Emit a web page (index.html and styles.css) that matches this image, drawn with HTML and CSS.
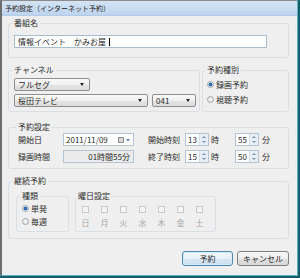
FILE: index.html
```html
<!DOCTYPE html>
<html lang="ja">
<head>
    <meta charset="UTF-8">
    <meta name="viewport" content="width=device-width, initial-scale=1.0">
    <title>予約設定（インターネット予約）</title>
    <link rel="stylesheet" href="styles.css">
</head>
<body>
    <div class="window">
        <div class="titlebar">予約設定（インターネット予約）</div>

        <div class="content">
            <fieldset class="group group-name">
                <legend>番組名</legend>
                <div class="textbox"><span>情報イベント　かみお屋</span><span class="caret"></span></div>
            </fieldset>

            <div class="group-row">
                <fieldset class="group group-channel">
                    <legend>チャンネル</legend>
                    <div class="combo combo-type"><span class="combo-text">フルセグ</span><span class="arrow"></span></div>
                    <div class="combo-row">
                        <div class="combo combo-station"><span class="combo-text">桜田テレビ</span><span class="arrow"></span></div>
                        <div class="combo combo-number"><span class="combo-text">041</span><span class="arrow"></span></div>
                    </div>
                </fieldset>

                <fieldset class="group group-kind">
                    <legend>予約種別</legend>
                    <div class="radio-line"><span class="radio checked"></span>録画予約</div>
                    <div class="radio-line"><span class="radio"></span>視聴予約</div>
                </fieldset>
            </div>

            <fieldset class="group group-time">
                <legend>予約設定</legend>
                <div class="time-row">
                    <span class="label">開始日</span>
                    <div class="datebox">
                        <span class="date-text">2011/11/09</span>
                        <span class="cal-icon"></span>
                        <span class="cal-arrow"></span>
                    </div>
                    <span class="label label-time">開始時刻</span>
                    <div class="spin"><span class="spin-value">13</span><span class="spin-buttons"><span class="up"></span><span class="down"></span></span></div>
                    <span class="unit unit-hour">時</span>
                    <div class="spin"><span class="spin-value">55</span><span class="spin-buttons"><span class="up"></span><span class="down"></span></span></div>
                    <span class="unit unit-min">分</span>
                </div>
                <div class="time-row">
                    <span class="label">録画時間</span>
                    <div class="duration">01時間55分</div>
                    <span class="label label-time">終了時刻</span>
                    <div class="spin"><span class="spin-value">15</span><span class="spin-buttons"><span class="up"></span><span class="down"></span></span></div>
                    <span class="unit unit-hour">時</span>
                    <div class="spin"><span class="spin-value">50</span><span class="spin-buttons"><span class="up"></span><span class="down"></span></span></div>
                    <span class="unit unit-min">分</span>
                </div>
            </fieldset>

            <fieldset class="group group-repeat">
                <legend>継続予約</legend>
                <div class="repeat-row">
                    <fieldset class="group group-repeat-type">
                        <legend>種類</legend>
                        <div class="radio-line"><span class="radio checked"></span>単発</div>
                        <div class="radio-line"><span class="radio"></span>毎週</div>
                    </fieldset>
                    <fieldset class="group group-days">
                        <legend>曜日設定</legend>
                        <div class="days">
                            <div class="day"><span class="checkbox"></span><span>日</span></div>
                            <div class="day"><span class="checkbox"></span><span>月</span></div>
                            <div class="day"><span class="checkbox"></span><span>火</span></div>
                            <div class="day"><span class="checkbox"></span><span>水</span></div>
                            <div class="day"><span class="checkbox"></span><span>木</span></div>
                            <div class="day"><span class="checkbox"></span><span>金</span></div>
                            <div class="day"><span class="checkbox"></span><span>土</span></div>
                        </div>
                    </fieldset>
                </div>
            </fieldset>

            <div class="buttons">
                <button class="btn btn-default">予約</button>
                <button class="btn">キャンセル</button>
            </div>
        </div>
    </div>
</body>
</html>
```

FILE: styles.css
```css
* {
    box-sizing: border-box;
}

html, body {
    margin: 0;
    padding: 0;
}

body {
    width: 300px;
    height: 278px;
    overflow: hidden;
    background: #15606c;
    font-family: "Noto Sans CJK JP", "Noto Sans", sans-serif;
    font-size: 8px;
    color: #2b2b2b;
}

.window {
    width: 298px;
    height: 276px;
    background: #efefef;
    border-left: 2px solid #6c6c6c;
    border-top: 1px solid #8c8c8c;
    border-right: 1px solid #5fb2c2;
    border-bottom: 1px solid #5fb2c2;
}

.titlebar {
    height: 15px;
    padding-left: 3px;
    line-height: 14px;
    font-size: 7px;
    color: #222;
    background: linear-gradient(#d4e4f5, #bed4ed);
    border-bottom: 1px solid #b3cbe5;
}

.content {
    padding: 1px 8px 0 6px;
    display: flex;
    flex-direction: column;
}

/* group boxes */
.group {
    margin: 0;
    min-width: 0;
    border: 1px solid #d8dfe5;
    border-radius: 3px;
}

.group legend {
    padding: 0 2px;
    margin-left: -2px;
    line-height: 12px;
}

.group-name {
    padding: 6px 0 9px 5px;
}

.textbox {
    width: 253px;
    height: 13px;
    border: 1px solid #a9bdd2;
    background: #fff;
    padding-left: 3px;
    line-height: 11px;
    display: flex;
    align-items: center;
}

.caret {
    width: 1px;
    height: 8px;
    margin-left: 3px;
    background: #000;
}

.group-row {
    display: flex;
    gap: 2px;
    margin-top: 6px;
}

.group-channel {
    width: 192px;
    padding: 2px 0 4px 5px;
}

.group-kind {
    width: 87px;
    padding: 2px 0 4px 4px;
}

.combo {
    height: 13px;
    display: flex;
    align-items: center;
    justify-content: space-between;
    padding: 0 5px 0 3px;
    border: 1px solid #8f8f8f;
    border-radius: 2px;
    background: linear-gradient(#fafafa 0%, #f0f0f0 50%, #e4e4e4 51%, #dcdcdc 100%);
    line-height: 11px;
}

.arrow {
    border-left: 2px solid transparent;
    border-right: 2px solid transparent;
    border-top: 3px solid #222;
}

.combo-type {
    width: 76px;
}

.combo-row {
    display: flex;
    margin-top: 3px;
}

.combo-station {
    width: 134px;
}

.combo-number {
    width: 44px;
    margin-left: 4px;
}

.radio-line {
    display: flex;
    align-items: center;
    height: 12px;
    gap: 2px;
}

.group-kind .radio-line + .radio-line {
    margin-top: 3px;
}

.radio {
    width: 7px;
    height: 7px;
    border-radius: 50%;
    border: 1px solid #a2a6ab;
    background: radial-gradient(circle, #f6f6f6, #e0e0e0);
}

.radio.checked {
    background: radial-gradient(circle, #3a82cc 0, #1d5fa3 1.6px, #e8eef4 2.2px);
}

/* reservation settings */
.group-time {
    margin-top: 9px;
    padding: 0 0 5px 9px;
}

.time-row {
    display: flex;
    align-items: center;
    height: 13px;
}

.time-row + .time-row {
    margin-top: 4px;
}

.label {
    width: 45px;
}

.label-time {
    width: 37px;
    margin-left: 14px;
}

.datebox,
.duration {
    width: 71px;
    height: 13px;
    border: 1px solid #b5c3d2;
    display: flex;
    align-items: center;
    line-height: 11px;
}

.datebox {
    background: #fff;
    padding: 0 3px 0 2px;
}

.date-text {
    flex: 1;
}

.cal-icon {
    width: 6px;
    height: 6px;
    border: 1px solid #8d8d8d;
    background: #d8d8d8;
}

.cal-arrow {
    margin-left: 2px;
    border-left: 2px solid transparent;
    border-right: 2px solid transparent;
    border-top: 2px solid #3f70a8;
}

.duration {
    background: #ececec;
    justify-content: flex-end;
    padding-right: 3px;
}

.spin {
    width: 24px;
    height: 13px;
    border: 1px solid #b5c3d2;
    background: #fff;
    display: flex;
}

.spin-value {
    flex: 1;
    padding-left: 2px;
    line-height: 11px;
}

.spin-buttons {
    width: 9px;
    display: flex;
    flex-direction: column;
    background: #e7edf4;
    border-left: 1px solid #d3dde8;
}

.spin-buttons span {
    flex: 1;
    display: flex;
    align-items: center;
    justify-content: center;
}

.spin-buttons span::before {
    content: "";
    border-left: 2px solid transparent;
    border-right: 2px solid transparent;
}

.spin-buttons .up::before {
    border-bottom: 2px solid #7b95b2;
}

.spin-buttons .down::before {
    border-top: 2px solid #7b95b2;
}

.unit-hour {
    width: 24px;
    margin-left: 2px;
}

.unit-min {
    margin-left: 3px;
}

/* repeat settings */
.group-repeat {
    margin-top: 6px;
    padding: 3px 0 6px 7px;
}

.group-repeat > legend {
    margin-left: -4px;
}

.repeat-row {
    display: flex;
    gap: 6px;
}

.group-repeat-type {
    width: 53px;
    padding: 0 0 3px 5px;
}

.group-repeat-type .radio-line + .radio-line {
    margin-top: 1px;
}

.group-days {
    width: 141px;
    padding: 0 0 3px 0;
}

.group-days legend {
    margin-left: 0;
}

.days {
    display: flex;
}

.day {
    width: 19px;
    display: flex;
    flex-direction: column;
    align-items: center;
    color: #a8a8a8;
}

.checkbox {
    width: 7px;
    height: 7px;
    margin-top: 4px;
    margin-bottom: 5px;
    border: 1px solid #c6c9cd;
    background: #f4f4f4;
}

.day span:last-child {
    line-height: 10px;
}

/* buttons */
.buttons {
    display: flex;
    justify-content: flex-end;
    gap: 4px;
    margin-top: 12px;
}

.btn {
    width: 52px;
    height: 15px;
    padding: 0;
    font-family: inherit;
    font-size: 8px;
    line-height: 13px;
    color: #2b2b2b;
    border: 1px solid #7f7f7f;
    border-radius: 3px;
    background: linear-gradient(#f6f6f6 0%, #eeeeee 50%, #e0e0e0 51%, #d8d8d8 100%);
}

.btn-default {
    width: 51px;
    border-color: #4a88b8;
    background: linear-gradient(#f2f8fc 0%, #e6f0f8 50%, #d6e6f3 51%, #cde0f0 100%);
    box-shadow: inset 0 0 0 1px #d8ecf8;
}
```
